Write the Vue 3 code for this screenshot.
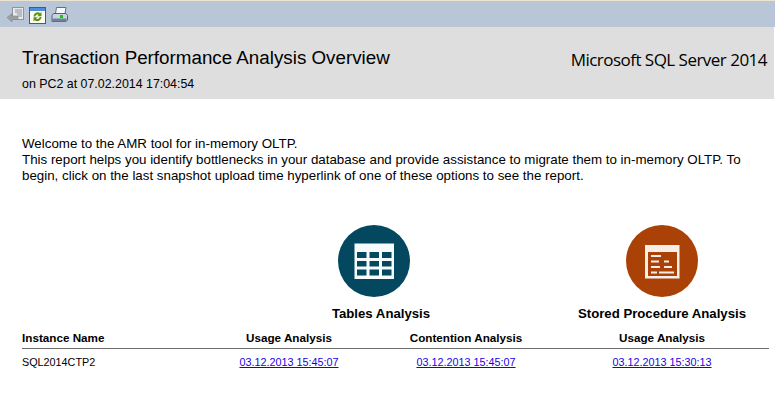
<script setup>
const columns = ['Instance Name', 'Usage Analysis', 'Contention Analysis', 'Usage Analysis']
const dates = ['03.12.2013 15:45:07', '03.12.2013 15:45:07', '03.12.2013 15:30:13']
</script>

<template>
  <div class="page">
    <div class="toolbar">
      <svg class="tool" width="17" height="17" viewBox="0 0 17 17">
        <rect x="5.500" y="0.500" width="11" height="12" fill="#e6e9ec" stroke="#8f949a" />
        <path d="M8 3h7M8 5h7M10 7h5M11 9h4" stroke="#8d9298" />
        <path d="M0 10.500 5 6.500v2.500h6v3.500H5v2.500z" fill="#9b9ea2" stroke="#85888c" stroke-width=".6" />
      </svg>
      <svg class="tool" width="17" height="17" viewBox="0 0 17 17">
        <rect x="0.500" y="0.500" width="16" height="16" fill="#fdfdf4" stroke="#2e5f9e" />
        <rect x="1" y="1" width="15" height="3" fill="#4d8fd6" />
        <path d="M4.500 9.500a4.200 4.200 0 0 1 6.800-3.300l1.200-1.200v4.200h-4.200l1.500-1.500A2.500 2.500 0 0 0 6.300 9.500z" fill="#5b9410" />
        <path d="M12.500 10a4.200 4.200 0 0 1-6.800 3.300l-1.200 1.200v-4.200h4.200l-1.500 1.500A2.500 2.500 0 0 0 10.700 10z" fill="#5b9410" />
      </svg>
      <svg class="tool" width="17" height="17" viewBox="0 0 17 17">
        <path d="M5.500 .5h9.500l-1 6H4.500z" fill="#f6f8fa" stroke="#5f7185" />
        <path d="M2.500 6.500h12.500l1.500 2v4.500l-1.500 1.500h-14v-6z" fill="#c9d4e0" stroke="#4e6379" />
        <rect x="1.500" y="11.500" width="14" height="3" fill="#6f8195" />
        <rect x="9" y="8" width="3" height="3" fill="#12c812" />
      </svg>
    </div>

    <header class="banner">
      <div>
        <h1>Transaction Performance Analysis Overview</h1>
        <p class="subtitle">on PC2 at 07.02.2014 17:04:54</p>
      </div>
      <div class="product">Microsoft SQL Server 2014</div>
    </header>

    <section class="intro">
      <p>Welcome to the AMR tool for in-memory OLTP.</p>
      <p>This report helps you identify bottlenecks in your database and provide assistance to migrate them to in-memory OLTP. To begin, click on the last snapshot upload time hyperlink of one of these options to see the report.</p>
    </section>

    <section class="report">
      <div class="group tables">
        <svg width="72" height="72" viewBox="0 0 72 72">
          <circle cx="36" cy="36" r="36" fill="#03485f" />
          <rect x="16.500" y="18.500" width="39.500" height="35.500" fill="#f7fafb" />
          <g fill="#03485f">
            <rect x="19" y="27" width="9.500" height="6" /><rect x="31.500" y="27" width="9.500" height="6" /><rect x="44" y="27" width="9.500" height="6" />
            <rect x="19" y="36" width="9.500" height="5.500" /><rect x="31.500" y="36" width="9.500" height="5.500" /><rect x="44" y="36" width="9.500" height="5.500" />
            <rect x="19" y="44.500" width="9.500" height="6" /><rect x="31.500" y="44.500" width="9.500" height="6" /><rect x="44" y="44.500" width="9.500" height="6" />
          </g>
        </svg>
        <div class="group-title">Tables Analysis</div>
      </div>
      <div class="group procedures">
        <svg width="72" height="72" viewBox="0 0 72 72">
          <circle cx="36" cy="36" r="36" fill="#aa4106" />
          <rect x="19" y="20" width="34.500" height="33.500" fill="#f8eee8" />
          <rect x="22" y="27" width="29" height="24" fill="#aa4106" />
          <g fill="#f8eee8">
            <rect x="25" y="30" width="10" height="2" />
            <rect x="25" y="35.500" width="8" height="2" /><rect x="38" y="35.500" width="5" height="2" />
            <rect x="25" y="41" width="9" height="2" /><rect x="38" y="41" width="8" height="2" />
            <rect x="25" y="46.500" width="6" height="2" /><rect x="33" y="46.500" width="15" height="2" />
          </g>
        </svg>
        <div class="group-title">Stored Procedure Analysis</div>
      </div>

      <div v-for="(column, i) in columns" :key="i" class="head" :class="{ first: i === 0 }">{{ column }}</div>

      <div class="cell first">SQL2014CTP2</div>
      <div v-for="(date, i) in dates" :key="'d' + i" class="cell">
        <a href="#">{{ date }}</a>
      </div>
    </section>
  </div>
</template>

<style scoped>
.page {
  width: 775px;
  height: 415px;
  overflow: hidden;
  background: #fff;
  color: #000;
  font-family: "Liberation Sans", Arial, sans-serif;
  font-size: 12px;
}
.toolbar {
  box-sizing: border-box;
  height: 27px;
  display: flex;
  align-items: flex-start;
  gap: 5px;
  padding: 6px 0 0 7px;
  background: #b9c6d8;
  border-top: 1px solid #ece4cf;
}
.tool { display: block; }
.banner {
  box-sizing: border-box;
  width: 774px;
  height: 72px;
  padding: 20px 7px 0 22px;
  background: #dedede;
  display: flex;
  justify-content: space-between;
}
h1 {
  margin: 0;
  font-size: 18.800px;
  font-weight: 400;
  line-height: 21px;
}
.subtitle {
  margin: 9px 0 0;
  font-size: 12.400px;
  line-height: 14px;
}
.product {
  font-family: "Open Sans", sans-serif;
  font-size: 17px;
  letter-spacing: -0.520px;
  line-height: 24px;
  padding-top: 1px;
}
.intro {
  padding: 37px 18px 0 22px;
  font-size: 13.330px;
  line-height: 16px;
}
.intro p { margin: 0; }
.report {
  display: grid;
  grid-template-columns: 179px 176px 178px 214px;
  margin: 41px 6px 0 22px;
}
.group {
  display: flex;
  flex-direction: column;
  align-items: center;
}
.tables { grid-column: 2 / 4; padding-right: 8px; }
.procedures { grid-column: 4; }
.group-title {
  margin-top: 9px;
  font-size: 13.200px;
  font-weight: 700;
  line-height: 15px;
  white-space: nowrap;
}
.tables .group-title { padding-left: 14px; }
.head {
  margin-top: 10px;
  padding-bottom: 3px;
  border-bottom: 1px solid #6e6e6e;
  font-size: 11.700px;
  font-weight: 700;
  line-height: 14px;
  text-align: center;
}
.cell {
  padding-top: 6px;
  font-size: 10.800px;
  line-height: 14px;
  text-align: center;
}
.first { text-align: left; }
a { color: #1a00e6; }
</style>
